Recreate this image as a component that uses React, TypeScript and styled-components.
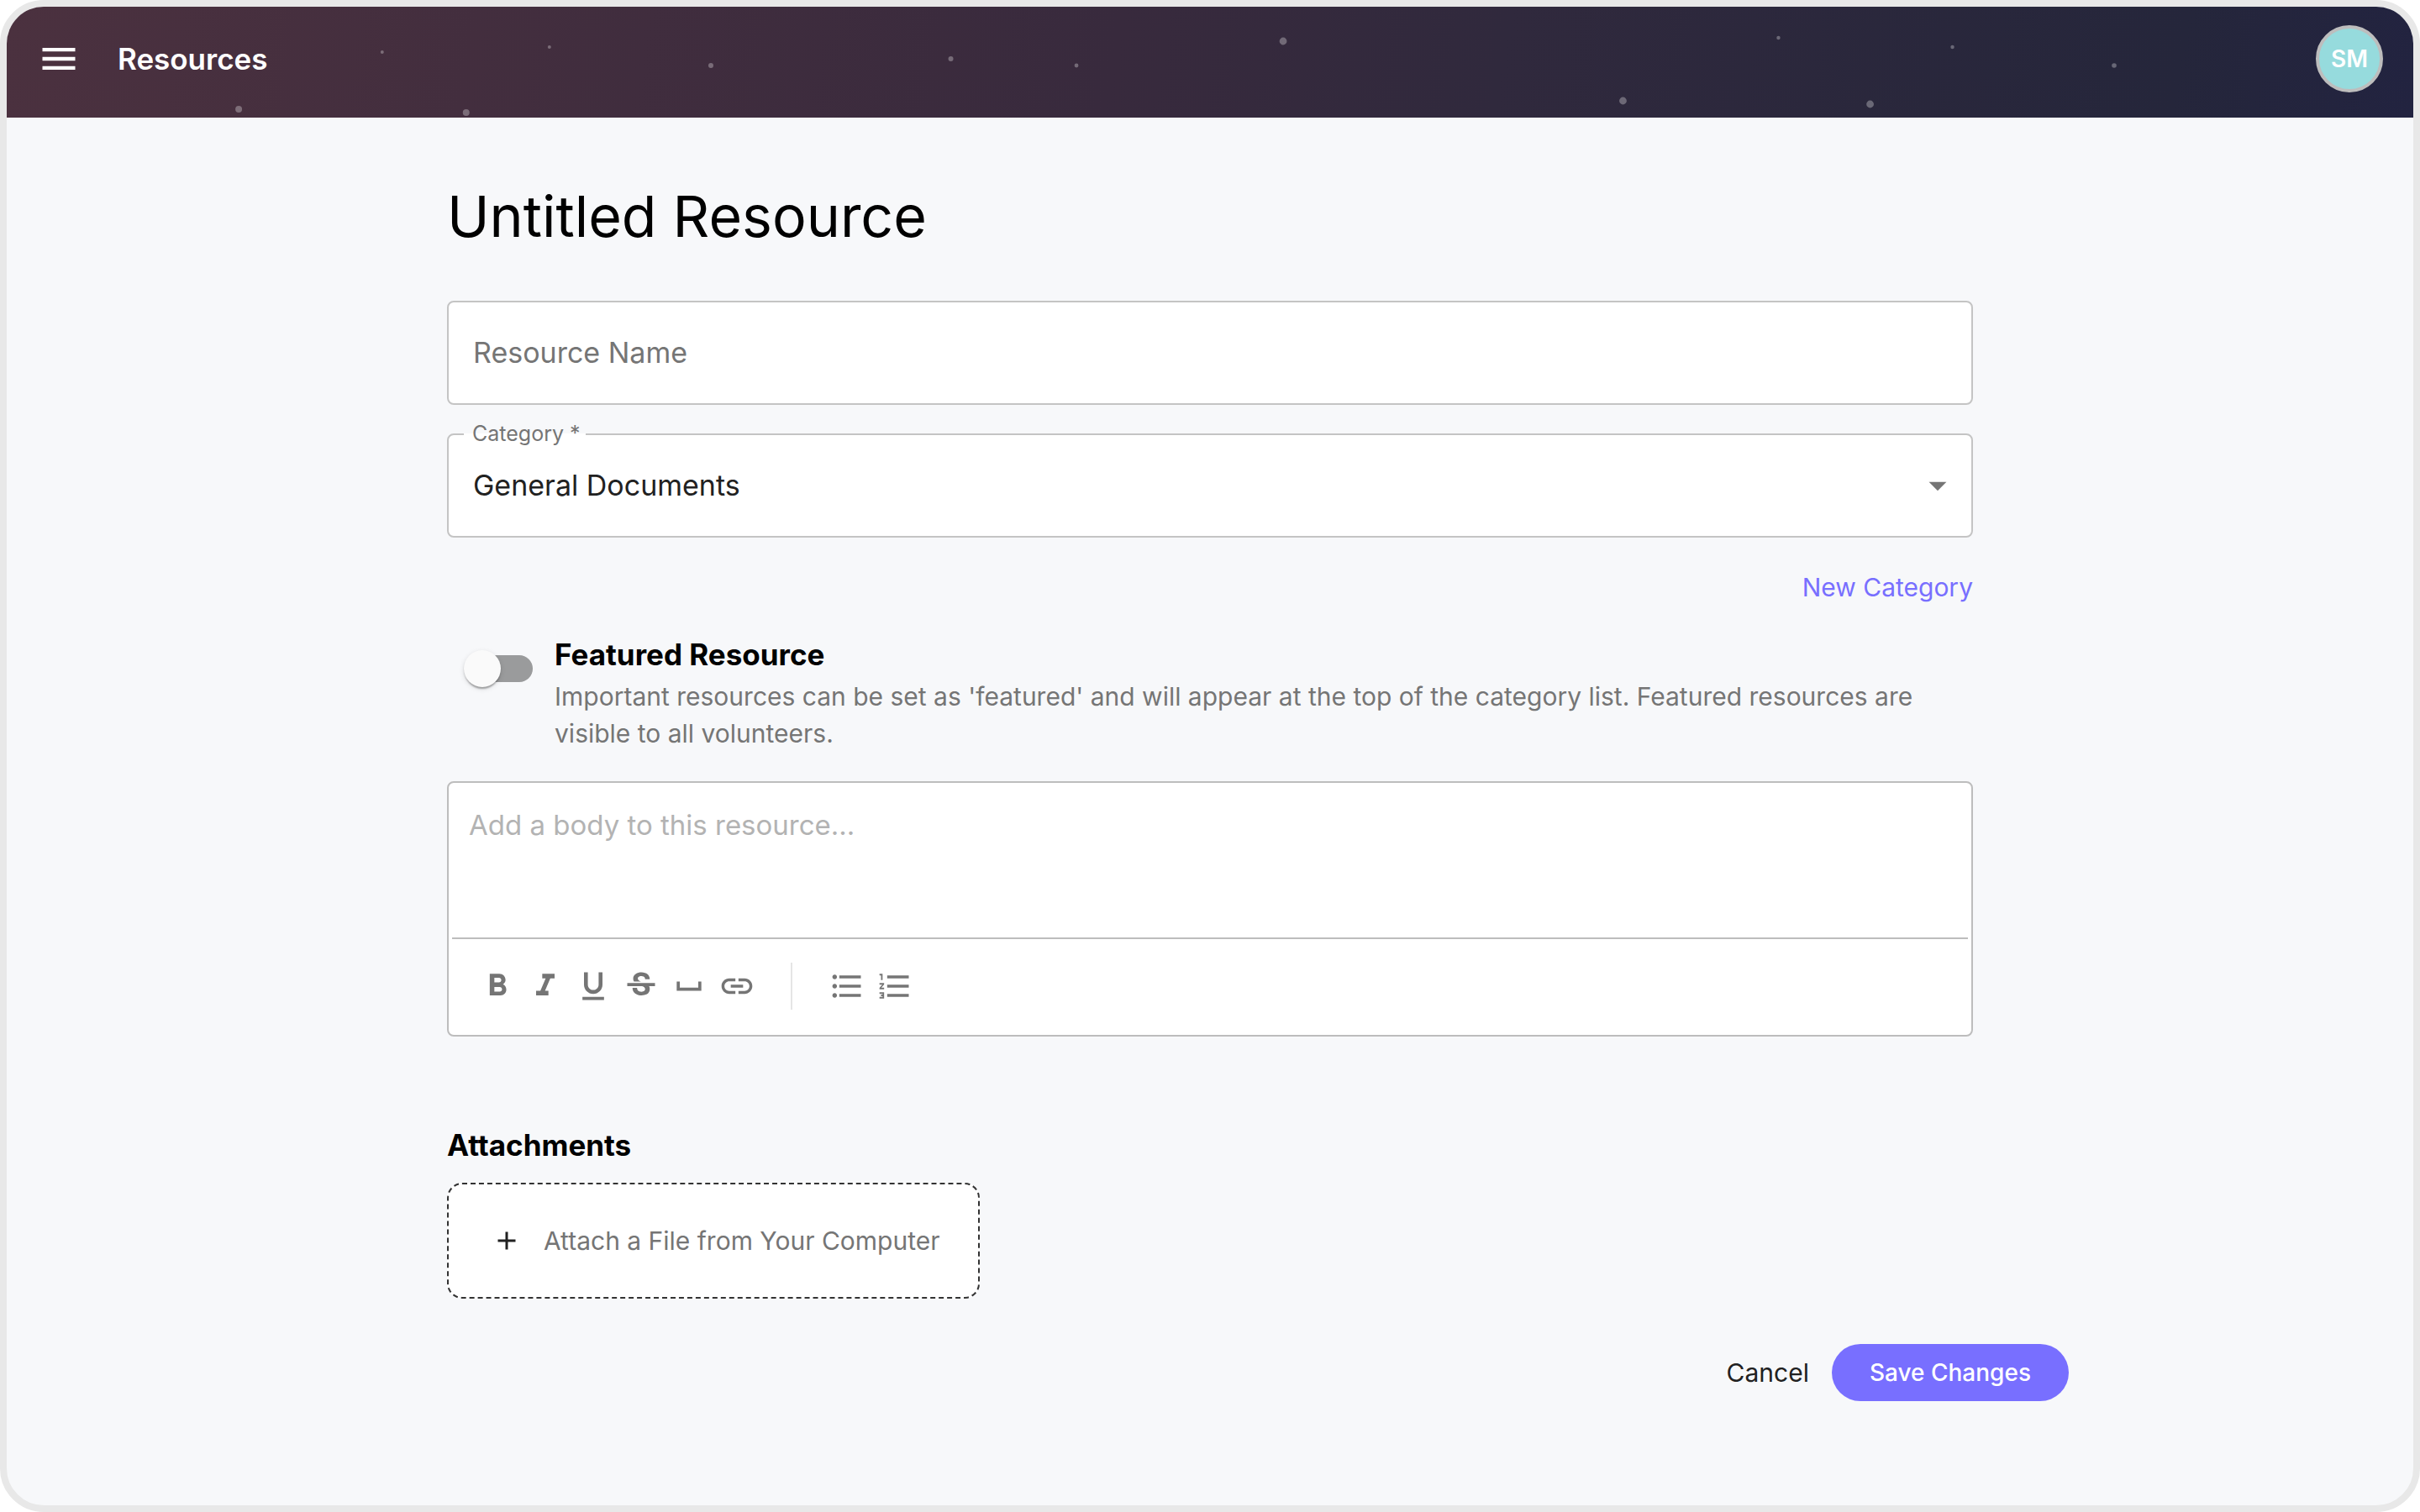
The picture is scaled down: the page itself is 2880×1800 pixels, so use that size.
import React, { useState } from "react";
import styled, { createGlobalStyle } from "styled-components";
import {
  MdAdd,
  MdArrowDropDown,
  MdFormatBold,
  MdFormatItalic,
  MdFormatListBulleted,
  MdFormatListNumbered,
  MdFormatUnderlined,
  MdLink,
  MdMenu,
  MdSpaceBar,
  MdStrikethroughS,
} from "react-icons/md";

const GlobalStyle = createGlobalStyle`
  *, *::before, *::after { box-sizing: border-box; }
  body {
    margin: 0;
    background: #ffffff;
    color: #000000;
    font-family: Inter, Roboto, "Liberation Sans", sans-serif;
    font-size: 30px;
    line-height: 44px;
  }
  button, input, select, textarea { font: inherit; }
  h1, h2, p { margin: 0; }
`;

const Window = styled.div`
  display: flex;
  flex-direction: column;
  min-height: 100vh;
  border: 8px solid #e8e8e8;
  border-radius: 52px;
  background: #f7f8fa;
  overflow: hidden;
`;

const Header = styled.header`
  position: relative;
  display: flex;
  align-items: center;
  height: 132px;
  padding: 0 36px 8px;
  background: linear-gradient(100deg, #4b313f 0%, #382a3d 46%, #30293d 62%, #25263b 90%, #222340 100%);
`;

const Stars = styled.svg`
  position: absolute;
  inset: 0;
  width: 100%;
  height: 100%;
  fill: rgba(255, 255, 255, 0.3);
  pointer-events: none;
`;

const MenuButton = styled.button`
  display: flex;
  margin: 0 44px 0 0;
  padding: 0;
  border: 0;
  background: none;
  color: #ffffff;
  font-size: 52px;
  cursor: pointer;
`;

const AppTitle = styled.span`
  flex: 1;
  color: #ffffff;
  font-size: 35px;
  font-weight: 600;
`;

const Avatar = styled.button`
  width: 80px;
  height: 80px;
  padding: 0;
  border: 4px solid #bdbdbd;
  border-radius: 50%;
  background: #96dbdd;
  color: #ffffff;
  font-size: 28px;
  font-weight: 600;
  cursor: pointer;
`;

const Main = styled.main`
  flex: 1;
  display: flex;
  flex-direction: column;
  align-items: center;
  padding: 73px 36px;
`;

const Column = styled.div`
  display: flex;
  flex-direction: column;
  width: 100%;
  max-width: 1816px;
`;

const PageTitle = styled.h1`
  margin-bottom: 57px;
  font-size: 68px;
  font-weight: 400;
  line-height: 88px;
`;

const Field = styled.div`
  position: relative;
  display: flex;
  height: 124px;
  border: 2px solid #c4c4c4;
  border-radius: 8px;
  background: #ffffff;

  & + & {
    margin-top: 34px;
  }
`;

const TextInput = styled.input`
  flex: 1;
  min-width: 0;
  padding: 0 29px;
  border: 0;
  border-radius: 8px;
  outline: 0;
  background: none;
  color: #212121;
  font-size: 34px;

  &::placeholder {
    color: #757575;
    opacity: 1;
  }
`;

const Select = styled.select`
  flex: 1;
  min-width: 0;
  padding: 0 80px 0 29px;
  border: 0;
  border-radius: 8px;
  outline: 0;
  appearance: none;
  background: none;
  color: #212121;
  font-size: 34px;
`;

const SelectArrow = styled(MdArrowDropDown)`
  position: absolute;
  top: 35px;
  right: 15px;
  color: #757575;
  font-size: 50px;
  pointer-events: none;
`;

const FloatingLabel = styled.label`
  position: absolute;
  top: -18px;
  left: 18px;
  padding: 0 6px 0 10px;
  background: linear-gradient(#f7f8fa 50%, #ffffff 50%);
  color: #757575;
  font-size: 25px;
  line-height: 32px;
`;

const LinkButton = styled.button`
  align-self: flex-end;
  margin: 37px 0 36px;
  padding: 0;
  border: 0;
  background: none;
  color: #786fff;
  cursor: pointer;
`;

const FeaturedRow = styled.div`
  display: flex;
  gap: 26px;
  margin-bottom: 35px;
  padding-left: 20px;
`;

const Switch = styled.input`
  position: relative;
  flex: none;
  width: 82px;
  height: 44px;
  margin: 17px 0 0;
  appearance: none;
  cursor: pointer;

  &::before,
  &::after {
    content: "";
    position: absolute;
  }

  &::before {
    inset: 6px 0 6px 7px;
    border-radius: 16px;
    background: #9a9b9c;
  }

  &::after {
    top: 0;
    left: 0;
    width: 44px;
    height: 44px;
    border-radius: 50%;
    background: #fafafa;
    box-shadow: 0 4px 2px -2px rgba(0, 0, 0, 0.2), 0 2px 2px rgba(0, 0, 0, 0.14),
      0 2px 6px rgba(0, 0, 0, 0.12);
  }

  &:checked::before {
    background: #bbb7ff;
  }

  &:checked::after {
    left: 38px;
    background: #786fff;
  }
`;

const FeaturedText = styled.div`
  display: flex;
  flex-direction: column;
  gap: 6px;
`;

const FeaturedLabel = styled.label`
  font-size: 35px;
  font-weight: 700;
`;

const Hint = styled.p`
  color: #757575;
`;

const Editor = styled.div`
  display: flex;
  flex-direction: column;
  padding: 0 4px;
  border: 2px solid #bdbdbd;
  border-radius: 8px;
  background: #ffffff;
`;

const EditorBody = styled.textarea`
  height: 184px;
  padding: 28px 20px;
  border: 0;
  outline: 0;
  resize: none;
  background: none;
  color: #212121;
  font-size: 33px;

  &::placeholder {
    color: #b3b3b3;
    opacity: 1;
  }
`;

const Toolbar = styled.div`
  display: flex;
  padding: 28px 25px 30px;
  border-top: 2px solid #bdbdbd;
`;

const ToolButton = styled.button`
  display: flex;
  align-items: center;
  justify-content: center;
  width: 57px;
  height: 56px;
  padding: 0;
  border: 0;
  background: none;
  color: #757575;
  font-size: 44px;
  cursor: pointer;
`;

const ToolDivider = styled.span`
  width: 2px;
  margin: 0 36px;
  background: #e5e5e5;
`;

const SectionTitle = styled.h2`
  margin: 107px 0 23px;
  font-size: 35px;
  font-weight: 700;
  line-height: 44px;
`;

const AttachButton = styled.button`
  display: flex;
  align-items: center;
  gap: 26px;
  width: 634px;
  height: 138px;
  padding: 0 0 0 51px;
  border: 2px dashed #333333;
  border-radius: 18px;
  background: #ffffff;
  color: #757575;
  cursor: pointer;

  svg {
    color: #212121;
    font-size: 36px;
  }
`;

const Actions = styled.div`
  display: flex;
  align-items: center;
  justify-content: flex-end;
  gap: 27px;
  width: 100%;
  max-width: 2044px;
  margin-top: 54px;
`;

const CancelButton = styled.button`
  padding: 0;
  border: 0;
  background: none;
  color: #212121;
  cursor: pointer;
`;

const SaveButton = styled.button`
  height: 68px;
  padding: 0 45px;
  border: 0;
  border-radius: 34px;
  background: #786fff;
  color: #ffffff;
  font-size: 28px;
  font-weight: 500;
  cursor: pointer;
`;

const stars = [
  { x: "9.64%", y: 122, r: 4 },
  { x: "15.6%", y: 54, r: 2 },
  { x: "19.09%", y: 126, r: 4 },
  { x: "22.55%", y: 48, r: 2 },
  { x: "29.26%", y: 70, r: 3 },
  { x: "39.23%", y: 62, r: 3 },
  { x: "44.45%", y: 70, r: 2.4 },
  { x: "53.04%", y: 41, r: 4.4 },
  { x: "67.16%", y: 112, r: 4.4 },
  { x: "73.62%", y: 37, r: 2.2 },
  { x: "77.43%", y: 116, r: 4.4 },
  { x: "80.85%", y: 48, r: 2.2 },
  { x: "87.57%", y: 70, r: 2.8 },
];

const textTools = [
  { label: "Bold", Icon: MdFormatBold },
  { label: "Italic", Icon: MdFormatItalic },
  { label: "Underline", Icon: MdFormatUnderlined },
  { label: "Strikethrough", Icon: MdStrikethroughS },
  { label: "Space", Icon: MdSpaceBar },
  { label: "Link", Icon: MdLink },
];

const listTools = [
  { label: "Bulleted list", Icon: MdFormatListBulleted },
  { label: "Numbered list", Icon: MdFormatListNumbered },
];

export default function App() {
  const [featured, setFeatured] = useState(false);

  return (
    <>
      <GlobalStyle />
      <Window>
        <Header>
          <Stars aria-hidden="true">
            {stars.map((star) => (
              <circle key={star.x} cx={star.x} cy={star.y} r={star.r} />
            ))}
          </Stars>
          <MenuButton type="button" aria-label="Menu">
            <MdMenu />
          </MenuButton>
          <AppTitle>Resources</AppTitle>
          <Avatar type="button">SM</Avatar>
        </Header>

        <Main>
          <Column>
            <PageTitle>Untitled Resource</PageTitle>

            <Field>
              <TextInput type="text" placeholder="Resource Name" aria-label="Resource Name" />
            </Field>
            <Field>
              <FloatingLabel htmlFor="category">Category *</FloatingLabel>
              <Select id="category" required defaultValue="general">
                <option value="general">General Documents</option>
              </Select>
              <SelectArrow aria-hidden="true" />
            </Field>
            <LinkButton type="button">New Category</LinkButton>

            <FeaturedRow>
              <Switch
                id="featured"
                type="checkbox"
                role="switch"
                aria-describedby="featured-hint"
                checked={featured}
                onChange={(event) => setFeatured(event.target.checked)}
              />
              <FeaturedText>
                <FeaturedLabel htmlFor="featured">Featured Resource</FeaturedLabel>
                <Hint id="featured-hint">
                  Important resources can be set as 'featured' and will appear at the top of the
                  category list. Featured resources are visible to all volunteers.
                </Hint>
              </FeaturedText>
            </FeaturedRow>

            <Editor>
              <EditorBody placeholder="Add a body to this resource..." aria-label="Body" />
              <Toolbar role="toolbar" aria-label="Formatting">
                {textTools.map(({ label, Icon }) => (
                  <ToolButton key={label} type="button" aria-label={label}>
                    <Icon />
                  </ToolButton>
                ))}
                <ToolDivider />
                {listTools.map(({ label, Icon }) => (
                  <ToolButton key={label} type="button" aria-label={label}>
                    <Icon />
                  </ToolButton>
                ))}
              </Toolbar>
            </Editor>

            <SectionTitle>Attachments</SectionTitle>
            <AttachButton type="button">
              <MdAdd />
              Attach a File from Your Computer
            </AttachButton>
          </Column>

          <Actions>
            <CancelButton type="button">Cancel</CancelButton>
            <SaveButton type="button">Save Changes</SaveButton>
          </Actions>
        </Main>
      </Window>
    </>
  );
}
